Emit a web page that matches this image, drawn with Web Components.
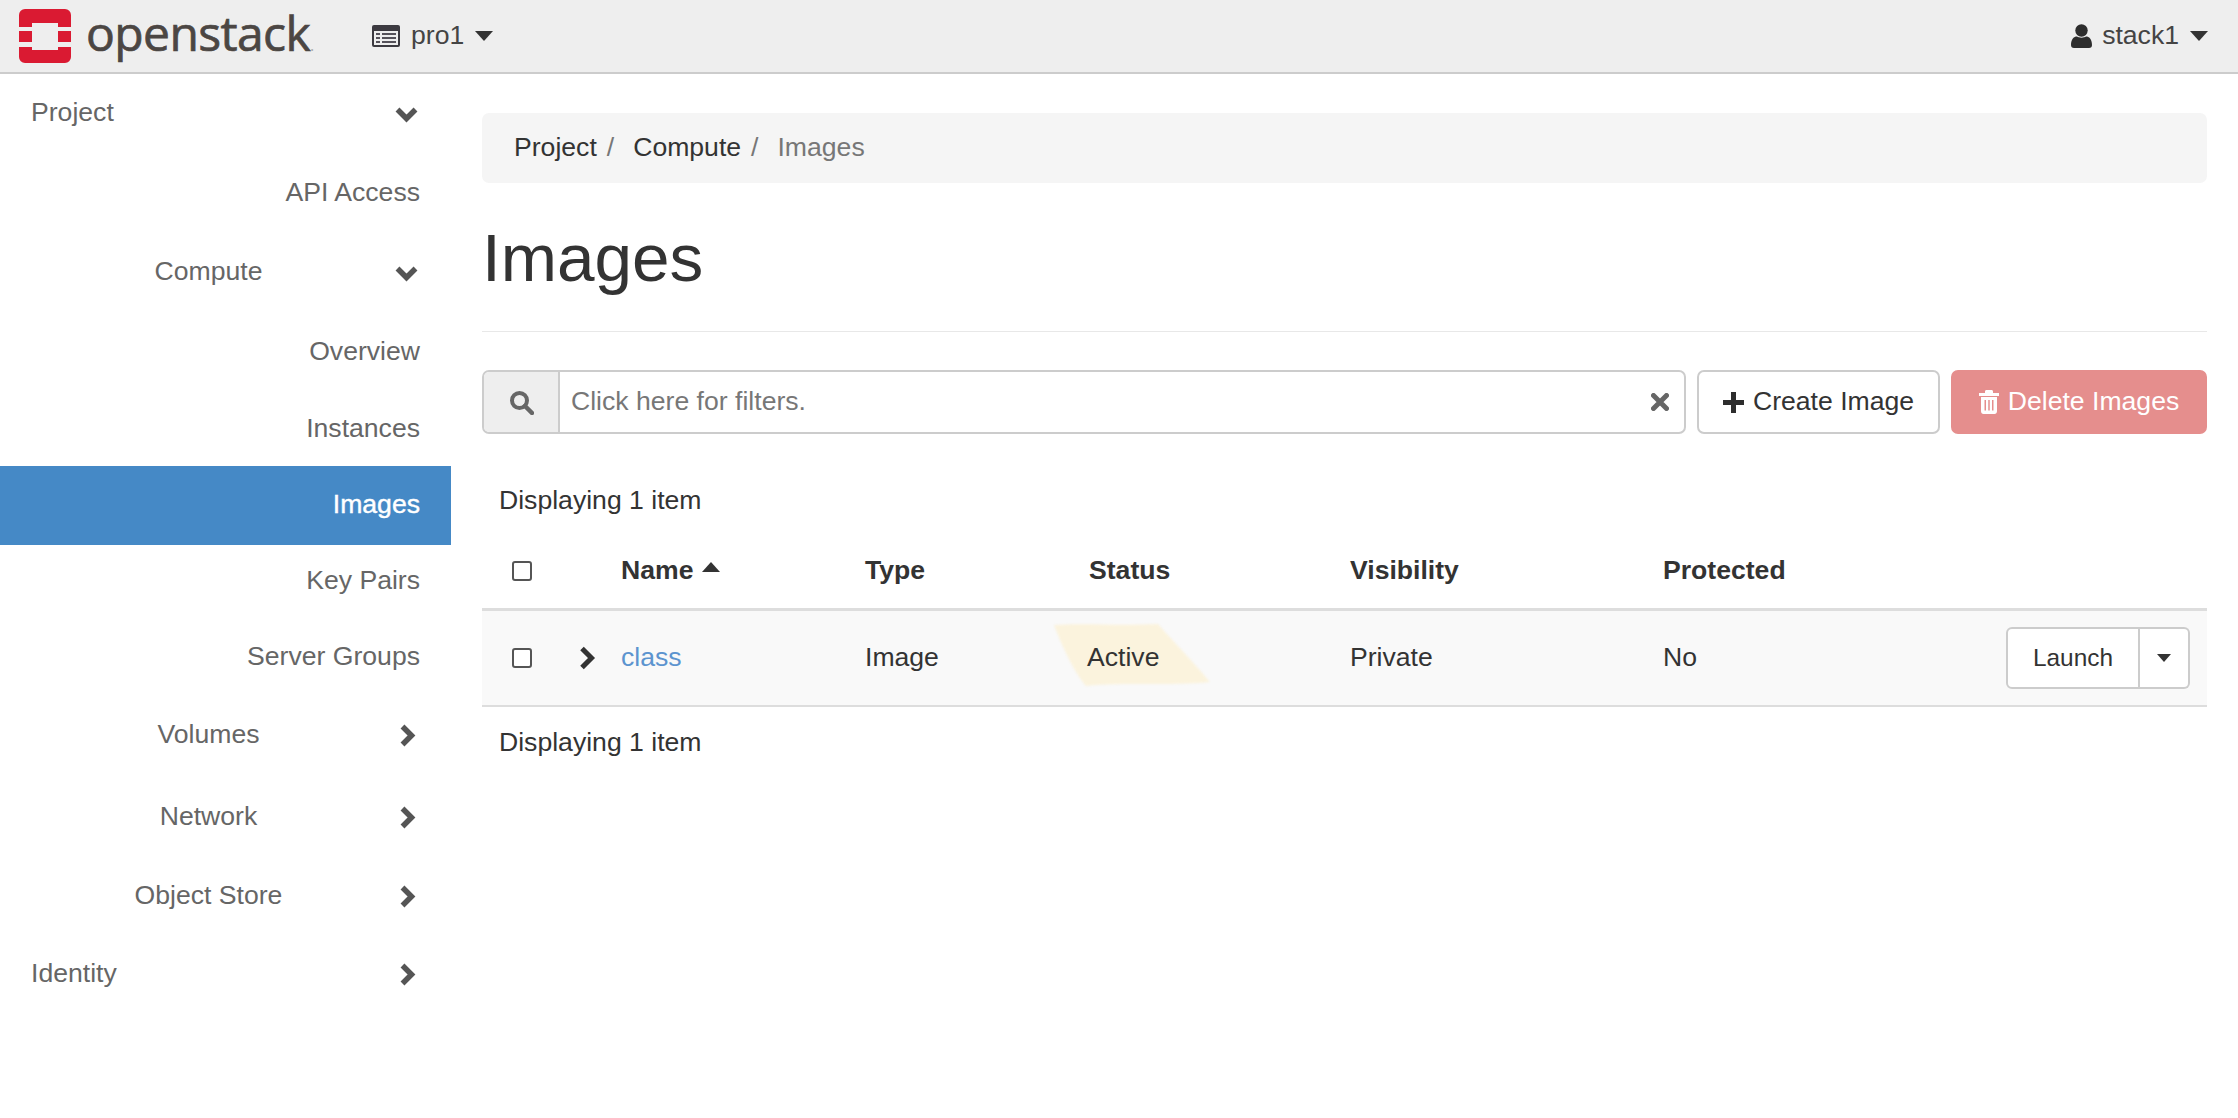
<!DOCTYPE html>
<html lang="en">
  <head>
    <meta charset="UTF-8" />
    <title>Images - OpenStack Dashboard</title>
    <style>
      html, body { margin: 0; background: #fff; }
      body {
        font: 26.6px/1.4 "Liberation Sans", Arial, sans-serif;
        color: #333;
      }
      .page { display: flex; align-items: flex-start; }
    </style>
  </head>
  <body>
    <os-navbar></os-navbar>
    <div class="page">
      <os-sidebar>
        <os-nav-item kind="top" open style="--h:80px;--up:2px">Project</os-nav-item>
        <os-nav-item style="--h:80px;--up:2px">API Access</os-nav-item>
        <os-nav-item kind="group" open style="--h:76px">Compute</os-nav-item>
        <os-nav-item style="--h:84px">Overview</os-nav-item>
        <os-nav-item style="--h:72px;--up:2px">Instances</os-nav-item>
        <os-nav-item active style="--h:79px;--up:2px">Images</os-nav-item>
        <os-nav-item style="--h:74px;--up:2px">Key Pairs</os-nav-item>
        <os-nav-item style="--h:76px">Server Groups</os-nav-item>
        <os-nav-item kind="group" style="--h:80px">Volumes</os-nav-item>
        <os-nav-item kind="group" style="--h:84px">Network</os-nav-item>
        <os-nav-item kind="group" style="--h:74px">Object Store</os-nav-item>
        <os-nav-item kind="top" style="--h:82px">Identity</os-nav-item>
      </os-sidebar>
      <os-images-page></os-images-page>
    </div>

    <template id="navbar-template">
      <style>
        :host {
          display: flex;
          align-items: center;
          height: 72px;
          padding: 0 30px 0 19px;
          background: #eee;
          border-bottom: 2px solid #ccc;
          color: #444;
        }
        .logo { display: flex; align-items: center; width: 353px; flex: none; }
        .logo svg { flex: none; display: block; }
        .word {
          margin-left: 15px;
          font: 48px/1 "Open Sans", sans-serif;
          letter-spacing: -.6px;
          -webkit-text-stroke: .7px #4b4643;
          color: #4b4643;
          position: relative;
          top: -3px;
        }
        .word small { font-size: 16px; color: #aaa; letter-spacing: 0; -webkit-text-stroke: 0; }
        .menu { display: flex; align-items: center; }
        .project svg { margin-right: 11px; }
        .caret { margin-left: 11px; }
        .user { margin-left: auto; }
        .user svg:first-child { margin-right: 10px; }
      </style>
      <div class="logo">
        <svg width="52" height="54" viewBox="0 0 52 54">
          <path fill="#da1a32" d="M6 0H46a6 6 0 0 1 6 6V18H39V14H13V18H0V6A6 6 0 0 1 6 0Z M0 22H13V33H0Z M39 22H52V33H39Z M0 38H13V41H39V38H52V48a6 6 0 0 1-6 6H6a6 6 0 0 1-6-6Z" />
        </svg>
        <span class="word">openstack<small>.</small></span>
      </div>
      <div class="menu project">
        <svg width="28" height="22" viewBox="0 0 28 22">
          <rect width="28" height="22" rx="2" fill="#3c3a40" />
          <rect x="2" y="6" width="24" height="14" fill="#eee" />
          <path d="M4 9H8M10 9H24M4 13H8M10 13H24M4 17H8M10 17H24" stroke="#55525a" stroke-width="2" />
        </svg>
        <span>pro1</span>
        <svg class="caret" width="18" height="10" viewBox="0 0 18 10"><path d="M0 0H18L9 10Z" fill="#333" /></svg>
      </div>
      <div class="menu user">
        <svg width="21" height="24" viewBox="0 0 21 24">
          <circle cx="10.5" cy="6.5" r="6.2" fill="#2d2d2d" />
          <path d="M0 21C0 15 3 12.500 6 12.500C8 14 13 14 15 12.500C18 12.500 21 15 21 21C21 23 20 24 18 24H3C1 24 0 23 0 21Z" fill="#2d2d2d" />
        </svg>
        <span>stack1</span>
        <svg class="caret" width="18" height="10" viewBox="0 0 18 10"><path d="M0 0H18L9 10Z" fill="#333" /></svg>
      </div>
    </template>

    <template id="nav-item-template">
      <style>
        :host {
          display: flex;
          align-items: center;
          box-sizing: border-box;
          height: var(--h);
          padding-right: 31px;
          padding-bottom: var(--up, 0);
          color: #666;
          justify-content: flex-end;
        }
        :host([kind="top"]) { justify-content: space-between; padding-left: 31px; padding-right: 33px; }
        :host([kind="group"]) { padding-left: 22px; padding-right: 33px; }
        :host([kind="group"]) .label { flex: 1; text-align: center; }
        :host([active]) { background: #4589c6; color: #fff; -webkit-text-stroke: .4px #fff; }
        svg { display: none; flex: none; }
        :host([kind]) svg { display: block; transform: rotate(-90deg); }
        :host([kind][open]) svg { transform: none; }
      </style>
      <span class="label"><slot></slot></span>
      <svg width="23" height="23" viewBox="0 0 23 23">
        <path d="M2.500 7.500L11.500 16.500L20.500 7.500" fill="none" stroke="#555" stroke-width="5.500" />
      </svg>
    </template>

    <template id="sidebar-template">
      <style>
        :host { display: block; width: 451px; flex: none; }
      </style>
      <slot></slot>
    </template>

    <template id="breadcrumb-template">
      <style>
        :host {
          display: flex;
          align-items: center;
          height: 70px;
          padding-left: 32px;
          background: #f5f5f5;
          border-radius: 7px;
          color: #333;
        }
        i { font-style: normal; color: #777; margin: 0 19px 0 10px; }
        span { color: #777; }
      </style>
      <b style="font-weight:normal">Project</b><i>/</i><b style="font-weight:normal">Compute</b><i>/</i><span>Images</span>
    </template>

    <template id="button-template">
      <style>
        :host {
          display: inline-flex;
          align-items: center;
          justify-content: center;
          box-sizing: border-box;
          height: 64px;
          border: 2px solid #ccc;
          border-radius: 7px;
          background: #fff;
          color: #333;
          flex: none;
        }
        :host([danger]) { background: #e58e8d; border-color: #e58e8d; color: #fff; }
      </style>
      <slot></slot>
    </template>

    <template id="filter-template">
      <style>
        :host {
          display: flex;
          flex: 1;
          box-sizing: border-box;
          height: 64px;
          border: 2px solid #ccc;
          border-radius: 7px;
          align-items: stretch;
          color: #777;
          overflow: hidden;
        }
        .addon {
          width: 74px;
          flex: none;
          display: flex;
          align-items: center;
          justify-content: center;
          background: #eee;
          border-right: 2px solid #ccc;
        }
        .field { flex: 1; display: flex; align-items: center; justify-content: space-between; padding: 0 15px 0 11px; }
      </style>
      <div class="addon">
        <svg width="25" height="25" viewBox="0 0 25 25">
          <circle cx="10.500" cy="10.500" r="7.500" fill="none" stroke="#666" stroke-width="4" />
          <path d="M16 16L23 23" stroke="#666" stroke-width="4.500" stroke-linecap="round" />
        </svg>
      </div>
      <div class="field">
        <span>Click here for filters.</span>
        <svg width="18" height="18" viewBox="0 0 18 18">
          <path d="M2.500 2.500L15.500 15.500M15.500 2.500L2.500 15.500" stroke="#666" stroke-width="5" stroke-linecap="round" />
        </svg>
      </div>
    </template>

    <template id="table-template">
      <style>
        :host {
          display: block;
          /* check + name + type + status + visibility + protected + actions */
          --cols: 139px 244px 224px 261px 313px 1fr auto;
        }
        .count { height: 50px; line-height: 50px; padding-left: 17px; }
        .row { display: grid; grid-template-columns: var(--cols); align-items: center; }
        .head { height: 86px; padding-top: 9px; box-sizing: border-box; border-bottom: 3px solid #ddd; font-weight: bold; }
        .body { height: 96px; box-sizing: border-box; background: #f9f9f9; border-bottom: 2px solid #ddd; }
        .first { display: flex; align-items: center; padding-left: 30px; }
        .check {
          width: 20px;
          height: 20px;
          box-sizing: border-box;
          border: 2px solid #555;
          border-radius: 3px;
          background: #fff;
          flex: none;
        }
        .first svg { margin-left: 46px; }
        a { color: #5c94cf; text-decoration: none; }
        .sort { margin-left: 9px; vertical-align: 7px; }
        .status { position: relative; }
        .status svg { position: absolute; left: -37px; top: -17px; filter: blur(1px); }
        .status span { position: relative; margin-left: -2px; }
        .actions { margin-right: 17px; display: flex; }
        .launch, .more {
          height: 62px;
          box-sizing: border-box;
          border: 2px solid #ccc;
          background: #fff;
          display: flex;
          align-items: center;
          justify-content: center;
        }
        .launch { width: 134px; border-radius: 6px 0 0 6px; font-size: 24.4px; }
        .more { width: 50px; border-left: 0; border-radius: 0 6px 6px 0; }
        .foot { height: 70px; line-height: 70px; padding-left: 17px; }
      </style>
      <div class="count">Displaying 1 item</div>
      <div class="row head">
        <div class="first"><div class="check"></div></div>
        <div>Name<svg class="sort" width="18" height="10" viewBox="0 0 18 10"><path d="M0 10H18L9 0Z" fill="#333" /></svg></div>
        <div>Type</div>
        <div>Status</div>
        <div>Visibility</div>
        <div>Protected</div>
        <div></div>
      </div>
      <div class="row body">
        <div class="first">
          <div class="check"></div>
          <svg width="18" height="24" viewBox="0 0 18 24">
            <path d="M4 2.500L13.500 12L4 21.500" fill="none" stroke="#333" stroke-width="5" />
          </svg>
        </div>
        <div><a>class</a></div>
        <div>Image</div>
        <div class="status">
          <svg width="160" height="66" viewBox="0 0 160 66">
            <path d="M2 3C30 1 70 4 106 2C120 18 145 44 158 60C120 64 70 60 34 64C22 50 10 24 2 3Z" fill="#fbf3dd" />
          </svg>
          <span>Active</span>
        </div>
        <div>Private</div>
        <div>No</div>
        <div class="actions">
          <div class="launch">Launch</div>
          <div class="more"><svg width="14" height="8" viewBox="0 0 14 8"><path d="M0 0H14L7 8Z" fill="#333" /></svg></div>
        </div>
      </div>
      <div class="foot">Displaying 1 item</div>
    </template>

    <template id="images-page-template">
      <style>
        :host { display: block; flex: 1; min-width: 0; padding: 39px 31px 0 31px; }
        h1 {
          margin: 0;
          padding: 27px 0 25px;
          font-size: 67.500px;
          line-height: 96px;
          font-weight: normal;
          border-bottom: 1px solid #e8e8e8;
          color: #333;
        }
        .toolbar { display: flex; gap: 11px; margin: 38px 0 41px; align-items: stretch; }
        .create { width: 243px; }
        .create svg, .delete svg { margin-right: 9px; }
        .delete { width: 256px; }
      </style>
      <os-breadcrumb></os-breadcrumb>
      <h1>Images</h1>
      <div class="toolbar">
        <os-filter></os-filter>
        <os-button class="create">
          <svg width="21" height="21" viewBox="0 0 21 21"><path d="M8 0H13V8H21V13H13V21H8V13H0V8H8Z" fill="#2d2d2d" /></svg>Create Image
        </os-button>
        <os-button class="delete" danger>
          <svg width="20" height="24" viewBox="0 0 20 24">
            <path fill="#fff" fill-rule="evenodd" d="M6 1.500C6 .6 6.600 0 7.500 0H12.500C13.400 0 14 .6 14 1.500V3H20V6H0V3H6Z M2 7H18V21C18 22.700 17 24 15.500 24H4.500C3 24 2 22.700 2 21Z M5.500 10V20.500H7V10Z M9.250 10V20.500H10.750V10Z M13 10V20.500H14.500V10Z" />
          </svg>Delete Images
        </os-button>
      </div>
      <os-images-table></os-images-table>
    </template>

    <script>
      // every element just stamps its template into an open shadow root
      function stamped(templateId) {
        return class extends HTMLElement {
          constructor() {
            super();
            const shadow = this.attachShadow({ mode: "open" });
            const template = document.getElementById(templateId);
            shadow.appendChild(template.content.cloneNode(true));
          }
        };
      }
      customElements.define("os-navbar", stamped("navbar-template"));
      customElements.define("os-nav-item", stamped("nav-item-template"));
      customElements.define("os-sidebar", stamped("sidebar-template"));
      customElements.define("os-breadcrumb", stamped("breadcrumb-template"));
      customElements.define("os-button", stamped("button-template"));
      customElements.define("os-filter", stamped("filter-template"));
      customElements.define("os-images-table", stamped("table-template"));
      customElements.define("os-images-page", stamped("images-page-template"));
    </script>
  </body>
</html>
